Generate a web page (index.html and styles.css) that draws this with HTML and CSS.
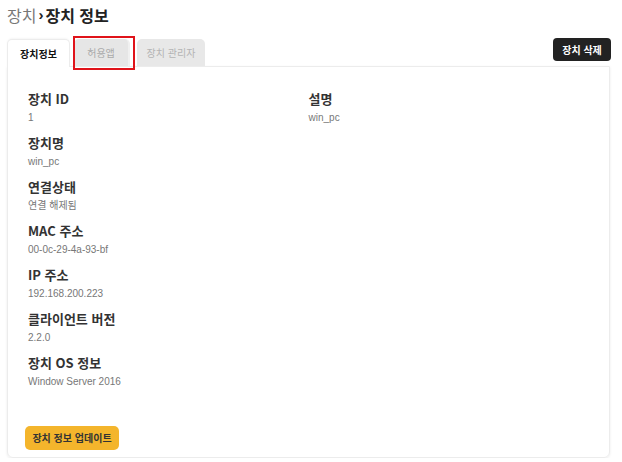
FILE: index.html
```html
<!DOCTYPE html>
<html lang="ko">
<head>
<meta charset="utf-8">
<link rel="stylesheet" href="styles.css">
</head>
<body>
<div class="page">
  <h1 class="title"><span class="crumb">장치</span><span class="sep">›</span><span class="current">장치 정보</span></h1>
  <div class="bar">
    <div class="tabs">
      <div class="tab active">장치정보</div>
      <div class="tab second">허용앱<span class="mark"></span></div>
      <div class="tab third">장치 관리자</div>
    </div>
    <button class="btn-delete">장치 삭제</button>
  </div>
  <div class="panel">
    <div class="cols">
      <div class="col">
        <div class="item"><div class="label">장치 ID</div><div class="value">1</div></div>
        <div class="item"><div class="label">장치명</div><div class="value">win_pc</div></div>
        <div class="item"><div class="label">연결상태</div><div class="value">연결 해제됨</div></div>
        <div class="item"><div class="label">MAC 주소</div><div class="value">00-0c-29-4a-93-bf</div></div>
        <div class="item"><div class="label">IP 주소</div><div class="value">192.168.200.223</div></div>
        <div class="item"><div class="label">클라이언트 버전</div><div class="value">2.2.0</div></div>
        <div class="item"><div class="label">장치 OS 정보</div><div class="value">Window Server 2016</div></div>
      </div>
      <div class="col">
        <div class="item"><div class="label">설명</div><div class="value">win_pc</div></div>
      </div>
    </div>
    <div class="actions">
      <button class="btn-update">장치 정보 업데이트</button>
    </div>
  </div>
</div>
</body>
</html>
```
FILE: styles.css
```css
* { box-sizing: border-box; }
html, body { margin: 0; padding: 0; background: #fff; }
body {
  font-family: "Noto Sans CJK KR", "Noto Sans", "Liberation Sans", sans-serif;
  color: #333;
}
.page { padding: 4px 11px 0 7px; }
.title {
  margin: 0;
  font-size: 16px;
  line-height: 22px;
  font-weight: 400;
  display: flex;
  align-items: center;
}
.crumb { color: #777; }
.sep {
  color: #222;
  margin: 0 2px 0 2px;
  font-family: "Liberation Sans", sans-serif;
  font-weight: 700;
  font-size: 15px;
}
.current { color: #222; font-weight: 700; }

.bar {
  margin-top: 13px;
  display: flex;
  justify-content: space-between;
  align-items: flex-start;
}
.tabs { display: flex; align-items: flex-end; }
.tab {
  height: 27px;
  display: flex;
  align-items: center;
  justify-content: center;
  font-size: 10px;
  border-radius: 5px 5px 0 0;
  position: relative;
}
.tab.active {
  width: 63px;
  background: #fff;
  color: #111;
  font-weight: 700;
  border: 1px solid #ececec;
  border-bottom: none;
  box-shadow: 0 -1px 2px rgba(0,0,0,0.04);
  z-index: 2;
  margin-bottom: -1px;
  height: 28px;
}
.tab.second {
  width: 56px;
  margin-left: 4px;
  background: #e6e6e6;
  color: #aaa;
  border-right: 2px solid #f0f0f0;
}
.tab.third {
  width: 68px;
  margin-left: 7px;
  background: #e8e8e8;
  color: #b4b4b4;
}
.mark {
  position: absolute;
  left: -1px;
  top: -3px;
  width: 62px;
  height: 34px;
  border: 2px solid #e0131a;
  z-index: 3;
}
.btn-delete {
  margin-top: -1px;
  height: 23px;
  width: 58px;
  border: none;
  border-radius: 4px;
  background: #222;
  color: #fff;
  font-family: inherit;
  font-size: 10px;
  font-weight: 700;
  padding: 0;
}
.panel {
  margin-right: 1px;
  border: 1px solid #ececec;
  border-radius: 0 0 6px 6px;
  box-shadow: 0 1px 3px rgba(0,0,0,0.08);
  padding: 23px 20px 7px 20px;
}
.cols { display: flex; }
.col { flex: 1; display: flex; flex-direction: column; gap: 8px; }
.label {
  font-size: 13px;
  line-height: 18px;
  font-weight: 700;
  color: #333;
}
.value {
  margin-top: 2px;
  font-family: "Liberation Sans", "Noto Sans CJK KR", sans-serif;
  font-size: 10px;
  line-height: 16px;
  color: #777;
}
.actions { margin-top: 33px; margin-left: -3px; }
.btn-update {
  height: 24px;
  width: 94px;
  border: none;
  border-radius: 5px;
  background: #f4b52c;
  color: #333;
  font-family: inherit;
  font-size: 10px;
  font-weight: 700;
  padding: 0;
}
```
